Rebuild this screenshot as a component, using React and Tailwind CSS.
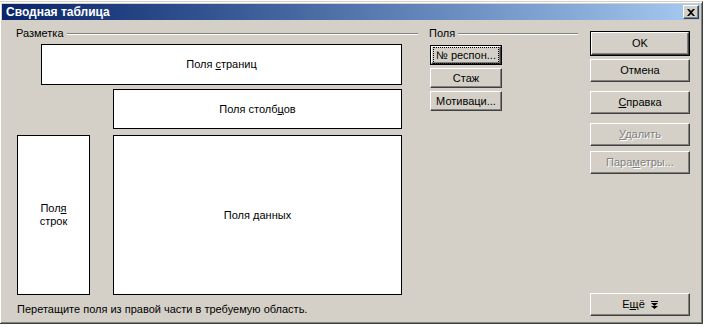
import clsx from "clsx";

function Btn({ children, className, disabled, def, focus }) {
  const face = (
    <div
      className={clsx(
        "flex items-center justify-center bg-[#d4d0c8] border border-t-white border-l-white border-r-[#404040] border-b-[#404040] shadow-[inset_-1px_-1px_#808080] text-[11px] leading-none",
        disabled ? "text-[#808080] [text-shadow:1px_1px_0_#fff]" : "text-black",
        def ? "h-full w-full" : className
      )}
    >
      {focus ? (
        <span className="border border-dotted border-black px-[2px] py-[2px]">{children}</span>
      ) : (
        children
      )}
    </div>
  );
  if (def) {
    return <div className={clsx("border border-black", className)}>{face}</div>;
  }
  return face;
}

function GroupHead({ label }) {
  return (
    <div className="flex h-[13px] items-center">
      <span className="text-[11px] leading-[13px]">{label}</span>
      <div className="ml-[3px] mt-px h-[2px] flex-1 border-t border-b border-t-[#808080] border-b-white" />
    </div>
  );
}

function Field({ children, className }) {
  return (
    <div
      className={clsx(
        "flex items-center justify-center bg-white border border-black text-center text-[11px] leading-[13px]",
        className
      )}
    >
      {children}
    </div>
  );
}

export default function App() {
  return (
    <div className="h-[327px] w-[704px] overflow-hidden bg-white pt-px font-['Liberation_Sans',Arial,sans-serif] text-black">
      <div className="ml-[-1px] flex h-[323px] w-[704px] flex-col border border-t-[#d4d0c8] border-l-[#d4d0c8] border-r-[#404040] border-b-[#404040] bg-[#d4d0c8] p-[2px] shadow-[inset_1px_1px_#fff,inset_-1px_-1px_#808080]">
        {/* title bar */}
        <div className="flex h-[18px] items-center justify-between bg-gradient-to-r from-[#0a246a] to-[#a6caf0] pl-[4px] pr-[1px]">
          <span className="text-[12px] font-bold leading-none text-white">Сводная таблица</span>
          <div className="flex h-[14px] w-[16px] items-center justify-center border border-t-white border-l-white border-r-[#404040] border-b-[#404040] bg-[#d4d0c8] shadow-[inset_-1px_-1px_#808080]">
            <svg width="8" height="7" viewBox="0 0 8 7">
              <path d="M0 0h2l2 2 2-2h2L5 3.5 8 7H6L4 5 2 7H0l3-3.5z" fill="#000" />
            </svg>
          </div>
        </div>

        {/* body */}
        <div className="flex flex-1 pl-[14px] pt-[7px] pb-[5px]">
          {/* layout group */}
          <div className="flex w-[402px] flex-col">
            <GroupHead label="Разметка" />
            <Field className="ml-[25px] mt-[4px] h-[41px] w-[361px]">
              <span>Поля <u>с</u>траниц</span>
            </Field>
            <Field className="ml-[97px] mt-[4px] h-[40px] w-[289px]">
              <span>Поля столб<u>ц</u>ов</span>
            </Field>
            <div className="mt-[6px] flex">
              <Field className="ml-px h-[160px] w-[73px]">
                <span>
                  Пол<u>я</u>
                  <br />
                  строк
                </span>
              </Field>
              <Field className="ml-[23px] h-[160px] w-[289px]">
                <span>Поля <u>д</u>анных</span>
              </Field>
            </div>
            <div className="ml-px mt-[8px] text-[11px] leading-[13px]">
              Перетащите поля из правой части в требуемую область.
            </div>
          </div>

          {/* fields group */}
          <div className="ml-[11px] flex w-[149px] flex-col">
            <GroupHead label="Поля" />
            <div className="ml-px mt-[5px] flex flex-col gap-[3px]">
              <Btn def focus className="h-[20px] w-[72px]">
                № респон...
              </Btn>
              <Btn className="h-[20px] w-[72px]">Стаж</Btn>
              <Btn className="h-[20px] w-[72px]">Мотиваци...</Btn>
            </div>
          </div>

          {/* dialog buttons */}
          <div className="ml-[12px] mt-[4px] flex w-[100px] flex-col">
            <Btn def className="h-[25px] w-[100px]">
              OK
            </Btn>
            <Btn className="mt-[3px] h-[23px] w-[100px]">Отмена</Btn>
            <Btn className="mt-[9px] h-[23px] w-[100px]">
              <span>
                <u>С</u>правка
              </span>
            </Btn>
            <Btn disabled className="mt-[9px] h-[23px] w-[100px]">
              <span>
                <u>У</u>далить
              </span>
            </Btn>
            <Btn disabled className="mt-[5px] h-[23px] w-[100px]">
              <span>
                Пара<u>м</u>етры...
              </span>
            </Btn>
            <Btn className="mt-auto h-[23px] w-[100px]">
              <span className="flex items-center gap-[6px]">
                <span>
                  Е<u>щ</u>ё
                </span>
                <svg width="7" height="8" viewBox="0 0 7 8">
                  <path d="M0 0h7v1H0z M0 2h7L3.5 5z M0 5h7L3.5 8z" fill="#000" />
                </svg>
              </span>
            </Btn>
          </div>
        </div>
      </div>
    </div>
  );
}
